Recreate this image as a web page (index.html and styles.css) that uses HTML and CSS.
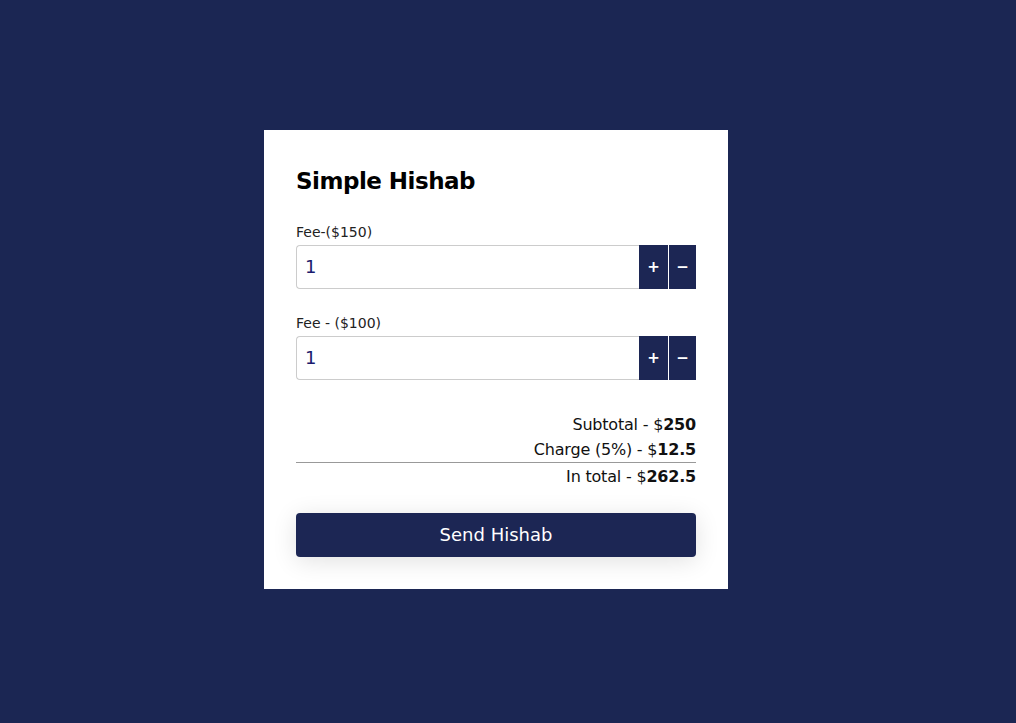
FILE: index.html
```html
<!DOCTYPE html>
<html lang="en">
<head>
  <meta charset="UTF-8">
  <meta name="viewport" content="width=device-width, initial-scale=1.0">
  <title>Simple Hishab</title>
  <link rel="stylesheet" href="styles.css">
</head>
<body>

<div class="card">
  <h1>Simple Hishab</h1>

  <div class="field">
    <label for="fee150">Fee-($150)</label>
    <div class="counter">
      <input type="text" id="fee150" value="1">
      <button class="step">+</button>
      <button class="step">&minus;</button>
    </div>
  </div>

  <div class="field">
    <label for="fee100">Fee - ($100)</label>
    <div class="counter">
      <input type="text" id="fee100" value="1">
      <button class="step">+</button>
      <button class="step">&minus;</button>
    </div>
  </div>

  <div class="summary">
    <p>Subtotal - $<b>250</b></p>
    <p>Charge (5%) - $<b>12.5</b></p>
    <hr>
    <p>In total - $<b>262.5</b></p>
  </div>

  <button class="send">Send Hishab</button>
</div>

</body>
</html>
```

FILE: styles.css
```css
body {
  font-family: 'DejaVu Sans', 'Open Sans', sans-serif;
  margin: 0;
  padding: 0 24px 0 0;
  box-sizing: border-box;
  background-color: #1b2653;
  height: 100vh;
  display: flex;
  justify-content: center;
  align-items: center;
}

.card {
  background-color: #ffffff;
  width: 464px;
  padding: 32px;
  box-sizing: border-box;
  margin-bottom: 5px;
}

h1 {
  font-size: 23px;
  font-weight: 700;
  color: #000;
  margin: 2px 0 24px;
  line-height: 34px;
  letter-spacing: -0.5px;
}

.field {
  margin-bottom: 24px;
}

label {
  display: block;
  font-size: 14px;
  color: #222;
  line-height: 20px;
  margin-bottom: 3px;
}

.counter {
  display: flex;
  height: 44px;
}

.counter input {
  flex: 1;
  min-width: 0;
  border: 1px solid #cccccc;
  border-right: none;
  border-radius: 4px 0 0 4px;
  padding: 0 8px;
  font-family: inherit;
  font-size: 18px;
  color: #1a1a6e;
  outline: none;
}

.step {
  width: 29px;
  border: none;
  background-color: #1c2654;
  color: #fff;
  font-family: inherit;
  font-size: 15px;
  font-weight: 700;
  padding: 0;
  cursor: pointer;
}

.step + .step {
  border-left: 1px solid #fff;
  width: 28px;
}

.summary {
  text-align: right;
  margin-top: 32px;
}

.summary p {
  margin: 0;
  font-size: 16px;
  line-height: 25px;
  color: #111;
  letter-spacing: -0.2px;
}

.summary hr {
  border: none;
  border-top: 1px solid #999;
  margin: 0 0 1px;
}

.send {
  display: block;
  width: 100%;
  height: 44px;
  margin-top: 24px;
  background-color: #1c2654;
  color: #fff;
  border: none;
  border-radius: 4px;
  font-family: inherit;
  font-size: 18px;
  cursor: pointer;
  box-shadow: 0 4px 24px rgba(0, 0, 0, 0.12);
}
```
